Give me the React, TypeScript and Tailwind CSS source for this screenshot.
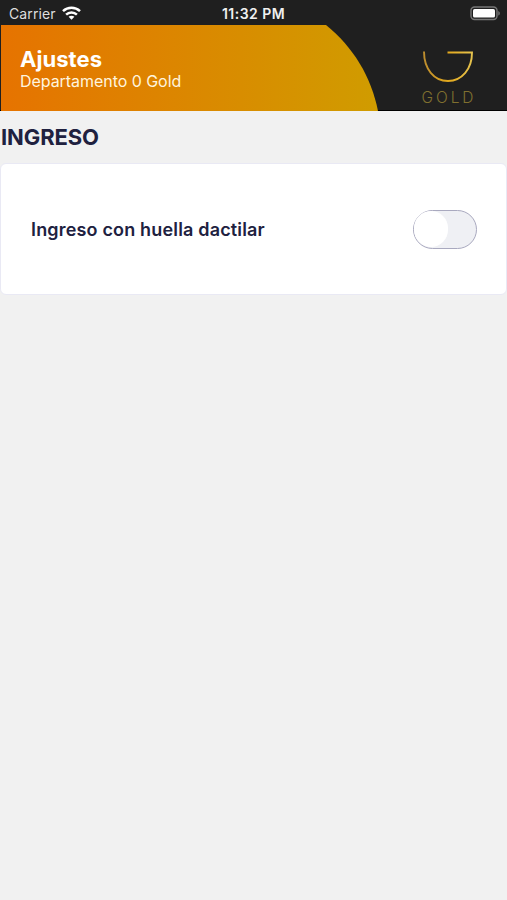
import React, { useState } from 'react';

const StatusBar: React.FC = () => (
  <div className="grid h-[25px] grid-cols-3 items-center bg-[#1f1f1f] pl-[9px] pr-[6px] pt-[3px] text-white">
    <div className="flex items-center gap-[6px] text-[14px] leading-none tracking-[0.1px] text-[#dedede]">
      <span>Carrier</span>
      <svg className="-mt-[2px]" width="19" height="14" viewBox="0 0 19 14" fill="none" stroke="#fff" strokeWidth="2.5">
        <path d="M1 5.2C5.8 .7 13.2 .7 18 5.2" />
        <path d="M4.1 8.6c3-2.9 7.8-2.9 10.8 0" />
        <path d="M9.5 13.7 6.6 10.8c1.6-1.5 4.2-1.5 5.8 0z" fill="#fff" stroke="none" />
      </svg>
    </div>
    <span className="-ml-[3px] whitespace-nowrap pb-px text-center text-[14px] font-semibold leading-none tracking-[0.45px] text-[#efefef]">11:32 PM</span>
    <svg className="-mt-[2px] justify-self-end" width="31" height="15" viewBox="0 0 31 15">
      <rect x="1" y="1" width="26" height="12.5" rx="3.5" fill="none" stroke="#777" strokeWidth="1.4" />
      <rect x="3" y="3" width="22" height="8.5" rx="1.6" fill="#fff" />
      <path d="M28.3 5v4.6c2-.8 2-3.8 0-4.6z" fill="#777" />
    </svg>
  </div>
);

const GoldLogo: React.FC = () => (
  <div className="flex w-[54px] flex-col items-center">
    <svg width="52" height="33" viewBox="0 0 52 33" fill="none">
      <defs>
        <linearGradient id="gold" x1="0" y1="0" x2="52" y2="0" gradientUnits="userSpaceOnUse">
          <stop offset="0" stopColor="#b98a2f" />
          <stop offset=".5" stopColor="#e3a91d" />
          <stop offset="1" stopColor="#e5c451" />
        </linearGradient>
      </defs>
      <path d="M2 1.5C2 19 12 31 26 31S50 19 50 2.5H25.5" stroke="url(#gold)" strokeWidth="1.9" />
    </svg>
    <span className="mt-[7px] pl-[2px] text-[15.5px] font-light leading-[15px] tracking-[2.9px] text-[#80702f]">GOLD</span>
  </div>
);

const Header: React.FC = () => (
  <header className="relative flex h-[86px] items-start justify-between border-b border-black bg-[#1f1f1f] pl-[20px] pr-[32px]">
    <svg className="absolute left-0 top-0" width="380" height="86" viewBox="0 0 380 86">
      <defs>
        <linearGradient id="banner" x1="0" x2="1">
          <stop offset="0" stopColor="#e67300" />
          <stop offset="1" stopColor="#d09c00" />
        </linearGradient>
      </defs>
      <path d="M1 0H326C353 22 371 51 378 86H1z" fill="url(#banner)" />
    </svg>
    <div className="relative pt-[21px] text-white">
      <h1 className="text-[22px] font-bold leading-[26px] tracking-[0.05px]">Ajustes</h1>
      <p className="-mt-px text-[16px] leading-[20px] tracking-[-0.05px] text-[#fff4de]">Departamento 0 Gold</p>
    </div>
    <div className="pt-[25px]">
      <GoldLogo />
    </div>
  </header>
);

const Toggle: React.FC = () => {
  const [on, setOn] = useState(false);

  return (
    <button
      role="switch"
      aria-checked={on}
      aria-label="Ingreso con huella dactilar"
      onClick={() => setOn(!on)}
      className={`flex h-[39px] w-[64px] items-center rounded-full border-[1.5px] border-[#a9a9bf] ${on ? 'justify-end bg-[#d99500]' : 'justify-start bg-[#eff0f4]'}`}
    >
      <span className="h-[36px] w-[34px] rounded-full bg-white" />
    </button>
  );
};

const App: React.FC = () => {
  return (
    <div className="h-screen overflow-hidden bg-[#f1f1f1] font-['Inter',sans-serif] text-[#20213f]">
      <StatusBar />
      <Header />
      <main className="pt-[12px]">
        <h2 className="pl-px text-[22px] font-bold leading-[28px] tracking-[-0.1px]">INGRESO</h2>
        <section className="mt-[12px] flex h-[132px] items-center justify-between rounded-[6px] border border-[#e9e9f4] bg-white pl-[30px] pr-[29px]">
          <span className="text-[18px] font-semibold tracking-[0.17px]">Ingreso con huella dactilar</span>
          <Toggle />
        </section>
      </main>
    </div>
  );
};

export default App;
